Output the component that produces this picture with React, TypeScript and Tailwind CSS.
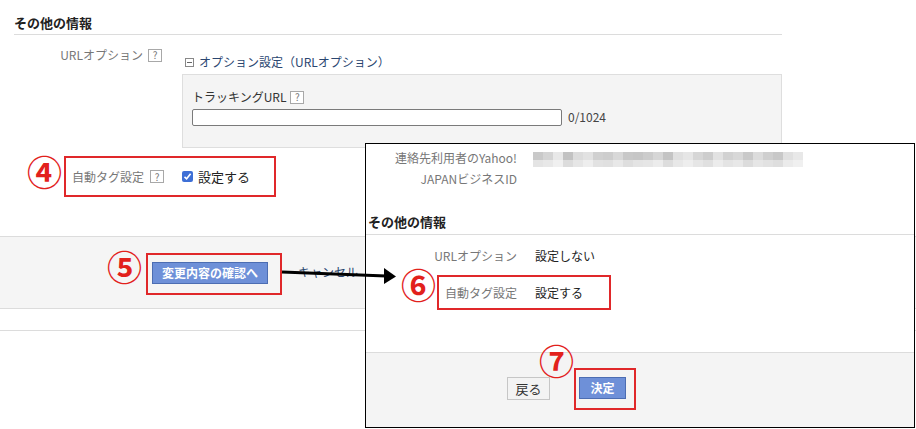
import React from 'react';

const topRow = [
  '#c9c9c9', '#d4d4d4', '#e8e8e8', '#c2c2c2', '#dcdcdc', '#e2e2e2', '#d0d0d0', '#cdcdcd', '#d8d8d8',
  '#c8c8c8', '#c6c6c6', '#cccccc', '#d6d6d6', '#c4c4c4', '#e0e0e0', '#e6e6e6', '#d6d6d6', '#cdcdcd',
  '#e2e2e2', '#d2d2d2', '#d8d8d8', '#c9c9c9', '#dcdcdc', '#cfcfcf', '#c8c8c8', '#e0e0e0', '#e8e8e8',
];
const bottomRow = [
  '#e4e4e4', '#e8e8e8', '#f0f0f0', '#dcdcdc', '#e6e6e6', '#eeeeee', '#e2e2e2', '#e0e0e0', '#e8e8e8',
  '#dedede', '#e4e4e4', '#e6e6e6', '#ececec', '#dddddd', '#e8e8e8', '#eeeeee', '#e6e6e6', '#e0e0e0',
  '#ececec', '#e4e4e4', '#e8e8e8', '#dcdcdc', '#e6e6e6', '#e2e2e2', '#dedede', '#ebebeb', '#f0f0f0',
];

// blurred-out ID (mosaic)
function Mosaic() {
  return (
    <svg width="270" height="15" viewBox="0 0 270 15">
      {topRow.map((c, i) => (
        <rect key={'t' + i} x={i * 10} y={0} width={10} height={8} fill={c} />
      ))}
      {bottomRow.map((c, i) => (
        <rect key={'b' + i} x={i * 10} y={8} width={10} height={7} fill={c} />
      ))}
    </svg>
  );
}

function Help() {
  return (
    <span className="inline-flex h-[13px] w-[14px] items-center justify-center border border-[#a8a8a8] bg-white text-[10px] leading-none text-[#777]">
      ?
    </span>
  );
}

function BlueButton({ label, w }: { label: string; w: string }) {
  return (
    <div
      className={`flex h-[22px] ${w} items-center justify-center border border-[#4c6db2] bg-[#6e90d8] text-[12px] font-bold text-white`}
    >
      {label}
    </div>
  );
}

export default function App() {
  return (
    <div className="relative h-[429px] w-[916px] overflow-hidden bg-white font-['Noto_Sans_CJK_JP','Noto_Sans',sans-serif] text-[12px] text-[#333]">
      {/* page behind */}
      <div className="ml-[14px] w-[768px]">
        <h2 className="border-b border-[#dcdcdc] pt-[14px] pb-[2px] text-[13px] font-bold leading-[18px] text-[#222]">
          その他の情報
        </h2>

        <div className="flex items-start">
          <div className="flex w-[168px] shrink-0 items-center justify-end gap-[5px] pr-[20px] pt-[11px] leading-[18px] text-[#777]">
            <span>URLオプション</span>
            <Help />
          </div>
          <div className="flex-1">
            <div className="flex items-center gap-[5px] pt-[18px] leading-[18px] text-[#2a4670]">
              <span className="ml-[3px] flex h-[9px] w-[9px] items-center justify-center border border-[#888]">
                <span className="h-px w-[5px] bg-[#666]" />
              </span>
              <span>オプション設定（URLオプション）</span>
            </div>
            <div className="mt-[3px] border border-[#dedede] bg-[#f4f4f4] pl-[9px] pt-[13px] pb-[21px]">
              <div className="flex items-center gap-[4px] leading-[18px]">
                <span>トラッキングURL</span>
                <Help />
              </div>
              <div className="mt-[2px] flex items-center gap-[6px]">
                <div className="h-[17px] w-[370px] rounded-[2px] border border-[#7a7a7a] bg-white" />
                <span className="text-[#444]">0/1024</span>
              </div>
            </div>
          </div>
        </div>

        <div className="ml-[50px] mt-[8px] flex h-[41px] w-[212px] items-center border-2 border-[#e0282a]">
          <div className="flex w-[98px] items-center justify-end gap-[6px] text-[#777]">
            <span>自動タグ設定</span>
            <Help />
          </div>
          <div className="ml-[18px] flex items-center gap-[5px] text-[#222]">
            <span className="flex h-[11px] w-[11px] items-center justify-center rounded-[2px] bg-[#3e6fd6]">
              <svg width="9" height="9" viewBox="0 0 9 9">
                <path d="M1.5 4.8 L3.6 6.8 L7.6 1.8" fill="none" stroke="white" strokeWidth="1.6" />
              </svg>
            </span>
            <span className="text-[13px]">設定する</span>
          </div>
        </div>
      </div>

      <div className="mt-[39px] h-[73px] border-y border-[#dcdcdc] bg-[#f5f5f5]">
        <div className="flex items-start pl-[146px] pt-[16px]">
          <div className="h-[42px] w-[136px] border-2 border-[#e0282a] pl-[4px] pt-[7px]">
            <BlueButton label="変更内容の確認へ" w="w-[116px]" />
          </div>
          <span className="ml-[16px] pt-[10px] leading-[18px] text-[#2a4670]">キャンセル</span>
        </div>
      </div>
      <div className="h-[22px] border-b border-[#dcdcdc]" />

      {/* confirmation screen */}
      <div className="absolute left-[365px] top-[143px] flex h-[285px] w-[550px] flex-col border border-black bg-white">
        <div className="flex pt-[3px]">
          <div className="w-[151px] text-right leading-[21px] text-[#777]">
            連絡先利用者のYahoo!
            <br />
            JAPANビジネスID
          </div>
          <div className="ml-[16px] mt-[5px]">
            <Mosaic />
          </div>
        </div>

        <h2 className="mt-[24px] border-b border-[#dcdcdc] pb-[3px] pl-[2px] text-[13px] font-bold leading-[18px] text-[#222]">
          その他の情報
        </h2>

        <div className="mt-[12px] flex leading-[18px]">
          <div className="w-[151px] text-right text-[#777]">URLオプション</div>
          <div className="ml-[18px] text-[#222]">設定しない</div>
        </div>

        <div className="ml-[71px] mt-[10px] flex h-[35px] w-[174px] items-center border-2 border-[#e0282a]">
          <div className="w-[78px] text-right text-[#777]">自動タグ設定</div>
          <div className="ml-[18px] text-[#222]">設定する</div>
        </div>

        <div className="mt-auto flex h-[75px] items-start border-t border-[#dcdcdc] bg-[#f4f4f4] pl-[141px] pt-[15px]">
          <div className="mt-[9px] flex h-[23px] w-[43px] items-center justify-center border border-[#c6c6c6] bg-[#f3f3f3] text-[13px] text-[#333]">
            戻る
          </div>
          <div className="ml-[24px] h-[42px] w-[62px] border-2 border-[#e0282a] pl-[3px] pt-[7px]">
            <BlueButton label="決定" w="w-[47px]" />
          </div>
        </div>
      </div>

      {/* annotations */}
      <svg className="absolute left-[280px] top-[265px]" width="120" height="20" viewBox="0 0 120 20">
        <line x1="2" y1="7" x2="106" y2="11" stroke="black" strokeWidth="3" />
        <polygon points="104,3 116,11.5 104,19" fill="black" />
      </svg>
      <span className="absolute left-[27px] top-[153px] text-[35px] font-semibold leading-none text-[#e2211c]">④</span>
      <span className="absolute left-[107px] top-[248px] text-[35px] font-semibold leading-none text-[#e2211c]">⑤</span>
      <span className="absolute left-[401px] top-[266px] text-[35px] font-semibold leading-none text-[#e2211c]">⑥</span>
      <span className="absolute left-[539px] top-[342px] text-[35px] font-semibold leading-none text-[#e2211c]">⑦</span>
    </div>
  );
}
